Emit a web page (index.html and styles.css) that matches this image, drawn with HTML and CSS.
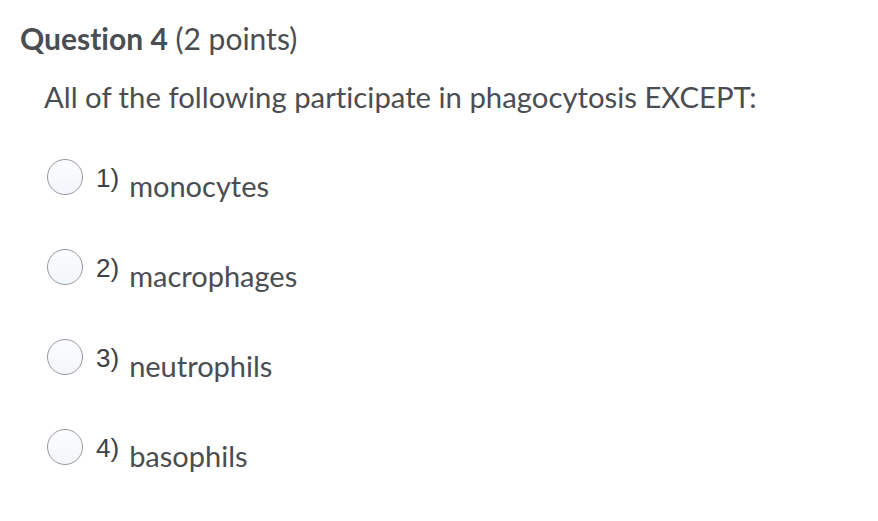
FILE: index.html
```html
<!DOCTYPE html>
<html>
<head>
<meta charset="utf-8">
<link rel="stylesheet" href="styles.css">
</head>
<body>
<div class="question">
  <h2 class="q-title"><span class="q-label">Question 4</span> (2 points)</h2>
  <p class="q-text">All of the following participate in phagocytosis EXCEPT:</p>
  <ul class="options">
    <li class="option"><span class="radio"></span><span class="num">1)</span><span class="answer">monocytes</span></li>
    <li class="option"><span class="radio"></span><span class="num">2)</span><span class="answer">macrophages</span></li>
    <li class="option"><span class="radio"></span><span class="num">3)</span><span class="answer">neutrophils</span></li>
    <li class="option"><span class="radio"></span><span class="num">4)</span><span class="answer">basophils</span></li>
  </ul>
</div>
</body>
</html>
```
FILE: styles.css
```css
html, body {
  margin: 0;
  padding: 0;
  background: #ffffff;
}
body {
  font-family: Lato, "Liberation Sans", sans-serif;
  color: #4a4d51;
  font-variant-ligatures: none;
}
.question {
  padding: 20px 0 50px 20px;
}
.q-title {
  margin: 0;
  font-size: 30px;
  font-weight: 400;
  line-height: 36px;
}
.q-label {
  font-weight: 700;
}
.q-text {
  margin: 23px 0 0 24px;
  font-size: 29.3px;
  line-height: 36px;
}
.options {
  list-style: none;
  margin: 44px 0 0 27px;
  padding: 0;
  display: flex;
  flex-direction: column;
  gap: 49px;
}
.option {
  display: flex;
  align-items: flex-start;
  height: 41px;
}
.radio {
  box-sizing: border-box;
  width: 36px;
  height: 36px;
  border-radius: 50%;
  border: 1px solid #96999d;
  background: linear-gradient(#fbfcfe, #f3f6fa);
  flex: none;
}
.num {
  font-family: "Liberation Sans", Arial, sans-serif;
  font-size: 26px;
  line-height: 26px;
  margin: 6px 0 0 13px;
  color: #3e4145;
}
.answer {
  font-size: 29px;
  line-height: 29px;
  margin: 12px 0 0 10px;
}
```
